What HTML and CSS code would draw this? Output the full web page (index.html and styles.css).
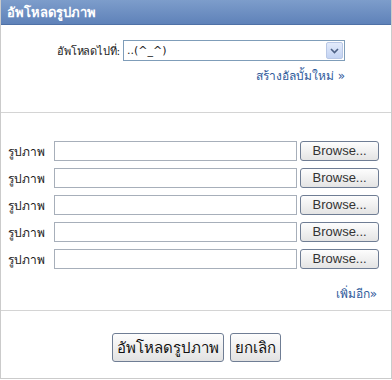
FILE: index.html
```html
<!DOCTYPE html>
<html>
	<head>
		<meta charset="utf-8">
		<title>อัพโหลดรูปภาพ</title>
		<link rel="stylesheet" href="styles.css">
	</head>
	<body>
		<div class="box">
			<div class="box_hd">อัพโหลดรูปภาพ</div>
			<div class="album">
				<div class="album_row">
					<span class="lbl">อัพโหลดไปที่:</span>
					<div class="select">
						<span>..(^_^)</span>
						<i class="arrow">
							<svg width="9" height="6" viewBox="0 0 9 6"><path d="M1 1 L4.5 4.5 L8 1" fill="none" stroke="#4d6185" stroke-width="1.6"/></svg>
						</i>
					</div>
				</div>
				<a class="link" href="#">สร้างอัลบั้มใหม่ »</a>
			</div>
			<div class="files">
				<div class="file_row"><span class="name">รูปภาพ</span><span class="input"></span><span class="browse">Browse...</span></div>
				<div class="file_row"><span class="name">รูปภาพ</span><span class="input"></span><span class="browse">Browse...</span></div>
				<div class="file_row"><span class="name">รูปภาพ</span><span class="input"></span><span class="browse">Browse...</span></div>
				<div class="file_row"><span class="name">รูปภาพ</span><span class="input"></span><span class="browse">Browse...</span></div>
				<div class="file_row"><span class="name">รูปภาพ</span><span class="input"></span><span class="browse">Browse...</span></div>
				<a class="link more" href="#">เพิ่มอีก»</a>
			</div>
			<div class="actions">
				<button type="button">อัพโหลดรูปภาพ</button>
				<button type="button">ยกเลิก</button>
			</div>
		</div>
	</body>
</html>
```
FILE: styles.css
```css
*{
	margin: 0;
	padding: 0;
	box-sizing: border-box;
}
body{
	font-family: Tahoma, "DejaVu Sans", "Noto Sans", sans-serif;
	font-size: 12px;
	color: #222;
	background: #fff;
}
.box{
	width: 392px;
	height: 379px;
	border: 1px solid #cbcbcb;
	border-top: 0;
	display: flex;
	flex-direction: column;
}
.box_hd{
	height: 25px;
	padding-left: 6px;
	line-height: 25px;
	font-size: 13px;
	font-weight: bold;
	color: #fff;
	background: linear-gradient(#7d9dcb, #5f82b9);
	border-bottom: 1px solid #4f71a6;
}
.album{
	height: 88px;
	padding: 15px 46px 0 0;
	border-bottom: 1px solid #d4d4d4;
	display: flex;
	flex-direction: column;
	align-items: flex-end;
}
.album_row{
	display: flex;
	align-items: center;
	gap: 3px;
}
.lbl{
	font-size: 11px;
	letter-spacing: -0.2px;
}
.select{
	width: 222px;
	height: 21px;
	border: 1px solid #7f9db9;
	display: flex;
	align-items: center;
	justify-content: space-between;
	padding: 0 1px 0 3px;
	font-size: 11px;
}
.arrow{
	width: 17px;
	height: 17px;
	border: 1px solid #b9c8e6;
	border-radius: 2px;
	background: linear-gradient(#e3ebfb, #c3d3f3);
	display: flex;
	align-items: center;
	justify-content: center;
}
.link{
	color: #2f5a9b;
	text-decoration: none;
	margin-top: 5px;
}
.files{
	flex: 1;
	padding: 28px 12px 0 7px;
	border-bottom: 1px solid #d4d4d4;
	display: flex;
	flex-direction: column;
	gap: 7px;
}
.file_row{
	display: flex;
	align-items: center;
	height: 20px;
}
.name{
	width: 46px;
}
.input{
	width: 244px;
	height: 20px;
	border: 1px solid #a7afba;
}
.browse{
	margin-left: 3px;
	width: 79px;
	height: 20px;
	border: 1px solid #6f7d94;
	border-radius: 3px;
	background: linear-gradient(#fdfdfd, #e4e4e4);
	font-family: "Liberation Sans", Arial, sans-serif;
	font-size: 13px;
	color: #333;
	text-align: center;
	line-height: 18px;
}
.more{
	align-self: flex-end;
	margin-top: 8px;
	margin-right: 2px;
}
.actions{
	height: 67px;
	padding-top: 22px;
	display: flex;
	justify-content: center;
	align-items: flex-start;
	gap: 6px;
}
.actions button{
	height: 29px;
	padding: 0 4px;
	font-family: inherit;
	font-size: 15px;
	color: #111;
	border: 1px solid #6f7d94;
	border-radius: 3px;
	background: linear-gradient(#fdfdfd, #e2e2e2);
}
```
